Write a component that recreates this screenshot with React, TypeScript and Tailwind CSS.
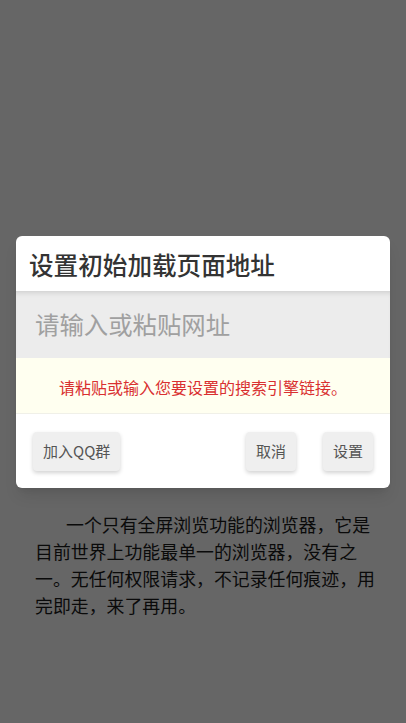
import React from "react";

export default function App() {
  const font = { fontFamily: '"Noto Sans CJK SC", "Noto Sans", sans-serif' };
  return (
    <div className="relative h-[723px] w-full overflow-hidden bg-white" style={font}>
      <div className="pl-[35px] pr-[26px] pt-[511px]">
        <p className="text-[17.9px] leading-[27px] text-[#1a1a1a] indent-[31px]">
          一个只有全屏浏览功能的浏览器，它是目前世界上功能最单一的浏览器，没有之一。无任何权限请求，不记录任何痕迹，用完即走，来了再用。
        </p>
      </div>
      <div className="absolute inset-0 flex items-center justify-center bg-black/60">
        <div className="w-[374px] overflow-hidden rounded-[6px] bg-white shadow-lg">
          <div className="flex h-[55px] items-center pl-[13px] pt-[2px] text-[24.6px] font-medium text-[#333]">
            设置初始加载页面地址
          </div>
          <div className="flex h-[67px] items-center bg-[#ececec] pl-[19px] text-[24.4px] text-[#a0a0a0] shadow-[inset_0_5px_5px_-3px_rgba(0,0,0,0.12)]">
            <span>请输入或粘贴网址</span>
          </div>
          <div className="flex h-[56px] items-center justify-center border-b border-[#f0f0e8] bg-[#fffff0] pt-[4px] text-[16px] text-[#d93030]">
            请粘贴或输入您要设置的搜索引擎链接。
          </div>
          <div className="flex items-center px-[17px] pb-[17px] pt-[18px]">
            <button className="flex h-[39px] items-center rounded-[4px] bg-[#efefef] px-[10px] text-[15px] text-[#555] shadow-[0_2px_4px_rgba(0,0,0,0.18)]">
              加入QQ群
            </button>
            <div className="flex-1" />
            <button className="flex h-[39px] items-center rounded-[4px] bg-[#efefef] px-[10px] text-[15px] text-[#555] shadow-[0_2px_4px_rgba(0,0,0,0.18)]">
              取消
            </button>
            <button className="ml-[27px] flex h-[39px] items-center rounded-[4px] bg-[#efefef] px-[10px] text-[15px] text-[#555] shadow-[0_2px_4px_rgba(0,0,0,0.18)]">
              设置
            </button>
          </div>
        </div>
      </div>
    </div>
  );
}
